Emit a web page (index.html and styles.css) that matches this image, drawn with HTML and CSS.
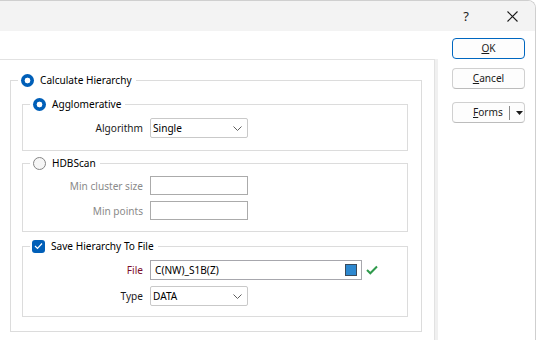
FILE: index.html
```html
<!DOCTYPE html>
<html>
<head>
<meta charset="utf-8">
<link rel="stylesheet" href="styles.css">
</head>
<body>
<div class="window">
  <div class="titlebar">
    <span class="cap-btn help">?</span>
    <span class="cap-btn close">
      <svg width="11" height="11" viewBox="0 0 11 11"><path d="M0.5 0.5 L10.5 10.5 M10.5 0.5 L0.5 10.5" stroke="#1b1b1b" stroke-width="1.1" fill="none"/></svg>
    </span>
  </div>
  <div class="content">
    <div class="main">
      <div class="panel">
        <fieldset class="group outer">
          <legend><span class="radio on"></span>Calculate Hierarchy</legend>

          <fieldset class="group inner agg">
            <legend><span class="radio on"></span>Agglomerative</legend>
            <div class="form">
              <label class="lbl">Algorithm</label>
              <div class="combo"><span>Single</span><svg width="9" height="5" viewBox="0 0 9 5"><path d="M0.5 0.5 L4.5 4.5 L8.5 0.5" stroke="#5f5f5f" fill="none"/></svg></div>
            </div>
          </fieldset>

          <fieldset class="group inner hdb">
            <legend><span class="radio"></span>HDBScan</legend>
            <div class="form">
              <label class="lbl disabled">Min cluster size</label>
              <div class="input dis"></div>
              <label class="lbl disabled">Min points</label>
              <div class="input dis"></div>
            </div>
          </fieldset>

          <fieldset class="group inner save">
            <legend><span class="check"><svg width="9" height="8" viewBox="0 0 9 8"><path d="M1 4 L3.5 6.5 L8 1.5" stroke="#fff" stroke-width="1.2" fill="none"/></svg></span>Save Hierarchy To File</legend>
            <div class="form">
              <label class="lbl file">File</label>
              <div class="file-row">
                <div class="input file-input"><span>C(NW)_S1B(Z)</span><span class="swatch"></span></div>
                <svg class="ok-mark" width="12" height="10" viewBox="0 0 12 10"><path d="M1 5 L4.3 8.3 L11 1.5" stroke="#2f9a4c" stroke-width="2" fill="none"/></svg>
              </div>
              <label class="lbl">Type</label>
              <div class="combo"><span>DATA</span><svg width="9" height="5" viewBox="0 0 9 5"><path d="M0.5 0.5 L4.5 4.5 L8.5 0.5" stroke="#5f5f5f" fill="none"/></svg></div>
            </div>
          </fieldset>
        </fieldset>
      </div>
      <div class="strip"></div>
    </div>
    <div class="side">
      <button class="btn default"><u>O</u>K</button>
      <button class="btn"><u>C</u>ancel</button>
      <button class="btn forms"><span class="forms-text"><u>F</u>orms</span><span class="sep"></span><svg width="7" height="4" viewBox="0 0 7 4"><path d="M0 0 L7 0 L3.5 4 Z" fill="#1b1b1b"/></svg></button>
    </div>
  </div>
</div>
</body>
</html>
```

FILE: styles.css
```css
* { box-sizing: border-box; }
html, body {
  margin: 0;
  padding: 0;
  width: 536px;
  height: 340px;
  overflow: hidden;
  background: #ffffff;
}
body {
  font-family: "Noto Sans", "Open Sans", sans-serif;
  font-size: 10.1px;
  color: #1a1a1a;
}
.window {
  width: 536px;
  height: 340px;
  border-top: 1px solid #cfcfcf;
  border-right: 1px solid #cfcfcf;
  border-top-right-radius: 8px;
  overflow: hidden;
  background: #fff;
}
.titlebar {
  height: 30px;
  background: #f3f3f3;
  display: flex;
  justify-content: flex-end;
}
.cap-btn {
  width: 46px;
  display: flex;
  align-items: center;
  justify-content: center;
  color: #1b1b1b;
}
.help { font-size: 13px; padding-bottom: 1px; }
.close svg { display: block; }

.content {
  display: flex;
  height: 309px;
}
.main {
  width: 439px;
  padding-top: 28px;
  margin-left: -1px;
  display: flex;
}
.panel {
  width: 437px;
  border-top: 1px solid #e2e2e2;
  border-left: 1px solid #e2e2e2;
  border-right: 1px solid #e2e2e2;
}
.strip {
  width: 3px;
  background: #f0f0f0;
}

.group {
  margin: 0;
  border: 1px solid #dcdcdc;
  min-width: 0;
}
.group legend {
  height: 16px;
  display: flex;
  align-items: center;
  gap: 6px;
  margin-left: 7px;
  padding: 0 4px 0 3px;
  color: #000;
  line-height: 16px;
}
.outer {
  width: 412px;
  margin: 12px 0 0 10px;
  padding: 8px 13px 14px 0;
}
.inner {
  margin-left: 11px;
  padding: 6px 0 12px 0;
}
.agg { margin-bottom: 4px; }
.hdb { padding: 5px 0 11px 0; margin-bottom: 6px; }
.save { padding: 6px 0 10px 0; }

.radio {
  width: 13px;
  height: 13px;
  border-radius: 50%;
  border: 1px solid #858585;
  background: #f6f6f6;
  flex: none;
}
.radio.on {
  border: none;
  background: radial-gradient(circle, #ffffff 0 2.6px, #005fb8 3.2px);
}
.check {
  width: 13px;
  height: 13px;
  border-radius: 3px;
  background: #005fb8;
  display: flex;
  align-items: center;
  justify-content: center;
  margin-left: -1px;
  flex: none;
}
.check svg { display: block; }

.form {
  display: grid;
  grid-template-columns: 120px auto;
  column-gap: 7px;
  row-gap: 6px;
  align-items: center;
}
.lbl {
  text-align: right;
  color: #1a1a1a;
}
.lbl.disabled { color: #8a8a8a; }
.lbl.file { color: #7b0d2c; }

.combo {
  width: 98px;
  height: 20px;
  border: 1px solid #c9c9c9;
  border-radius: 2px;
  background: #fff;
  display: flex;
  align-items: center;
  justify-content: space-between;
  padding: 0 5px 0 2px;
  color: #000;
}
.combo svg { display: block; }
.input {
  height: 19px;
  width: 98px;
  border: 1px solid #ababab;
  background: #fff;
}
.file-row {
  display: flex;
  align-items: center;
  gap: 4px;
}
.input.file-input {
  width: 212px;
  height: 20px;
  border-color: #a7a7ad;
  display: flex;
  align-items: center;
  justify-content: space-between;
  padding: 0 4px 0 4px;
  color: #000;
}
.swatch {
  width: 12px;
  height: 12px;
  background: #2d88cf;
  border: 1px solid #3a4b5c;
}
.ok-mark { display: block; }

.side {
  padding: 7px 0 0 14px;
  display: flex;
  flex-direction: column;
  align-items: flex-start;
}
.btn {
  width: 73px;
  height: 21px;
  border: 1px solid #d0d0d0;
  border-bottom-color: #bcbcbc;
  border-radius: 4px;
  background: #fdfdfd;
  font-family: "Noto Sans", "Open Sans", sans-serif;
  font-size: 10.1px;
  color: #1a1a1a;
  padding: 0;
  margin: 0 0 9px 0;
  line-height: 17px;
}
.btn.default {
  border: 1px solid #0067c0;
}
.btn.forms {
  margin-top: 4px;
  display: flex;
  align-items: center;
  padding: 0 0 0 20px;
}
.forms-text { flex: none; }
.sep {
  width: 1px;
  height: 14px;
  background: #8a8a8a;
  margin: 0 6px 0 6px;
  flex: none;
}
.btn.forms svg { display: block; flex: none; }
```
